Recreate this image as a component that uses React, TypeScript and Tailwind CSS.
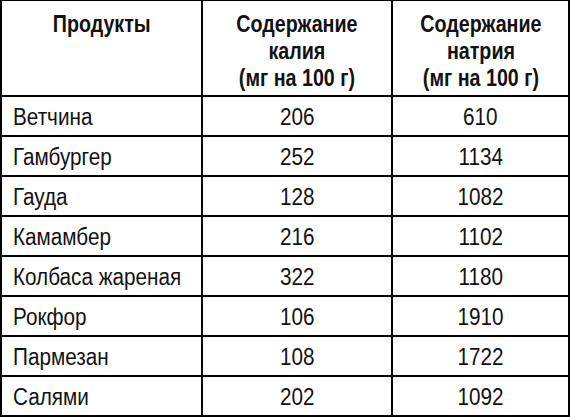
const rows = [
  ['Ветчина', '206', '610'],
  ['Гамбургер', '252', '1134'],
  ['Гауда', '128', '1082'],
  ['Камамбер', '216', '1102'],
  ['Колбаса жареная', '322', '1180'],
  ['Рокфор', '106', '1910'],
  ['Пармезан', '108', '1722'],
  ['Салями', '202', '1092'],
];

const font = { fontFamily: '"Liberation Sans", Arial, sans-serif' };

// Liberation Sans squeezed horizontally stands in for the condensed face of the original
function Narrow({ children, left, wide }: { children: React.ReactNode; left?: boolean; wide?: boolean }) {
  return (
    <span
      className={`inline-block whitespace-nowrap ${wide ? 'scale-x-[0.9]' : 'scale-x-[0.82]'} ${
        left ? 'origin-left' : 'origin-center'
      }`}
    >
      {children}
    </span>
  );
}

export default function App() {
  return (
    <div className="w-[570px] h-[417px] bg-white" style={font}>
      <div className="grid grid-cols-[199px_188px_175px] grid-rows-[94px_repeat(8,38px)] gap-[2px] bg-black pt-[1px] px-[2px] pb-[2px] text-[#111]">
        <div className="bg-white pt-[9px] text-center text-[24px] leading-[27px] font-bold">
          <Narrow>Продукты</Narrow>
        </div>
        <div className="bg-white pt-[9px] text-center text-[24px] leading-[27px] font-bold">
          <Narrow>
            Содержание
            <br />
            калия
            <br />
            (мг на 100 г)
          </Narrow>
        </div>
        <div className="bg-white pt-[9px] text-center text-[24px] leading-[27px] font-bold">
          <Narrow>
            Содержание
            <br />
            натрия
            <br />
            (мг на 100 г)
          </Narrow>
        </div>
        {rows.map((r) => (
          <div key={r[0]} className="contents">
            <div className="bg-white flex items-center pt-[2px] pl-[11px] text-[23px]">
              <Narrow left wide>
                {r[0]}
              </Narrow>
            </div>
            <div className="bg-white flex items-center justify-center pt-[2px] text-[23px]">
              <Narrow wide>{r[1]}</Narrow>
            </div>
            <div className="bg-white flex items-center justify-center pt-[2px] text-[23px]">
              <Narrow wide>{r[2]}</Narrow>
            </div>
          </div>
        ))}
      </div>
    </div>
  );
}
